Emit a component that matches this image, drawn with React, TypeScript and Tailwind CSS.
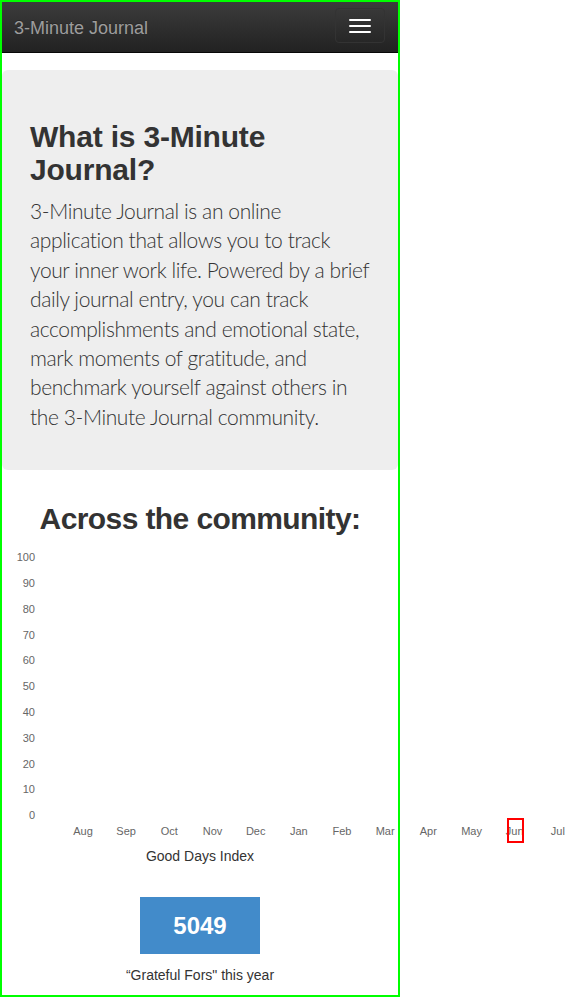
const MONTHS = ["Aug", "Sep", "Oct", "Nov", "Dec", "Jan", "Feb", "Mar", "Apr", "May", "Jun", "Jul"];
const TICKS = [100, 90, 80, 70, 60, 50, 40, 30, 20, 10, 0];

const INTRO_LINES = [
  "3-Minute Journal is an online",
  "application that allows you to track",
  "your inner work life. Powered by a brief",
  "daily journal entry, you can track",
  "accomplishments and emotional state,",
  "mark moments of gratitude, and",
  "benchmark yourself against others in",
  "the 3-Minute Journal community.",
];

function Navbar() {
  return (
    <nav className="flex h-[51px] items-center justify-between border-b border-[#080808] bg-gradient-to-b from-[#3c3c3c] to-[#222]">
      <a
        href="#"
        className="pl-[12px] pt-[1px] text-[18px] leading-[20px] text-[#9d9d9d] text-shadow-[0_-1px_0_rgba(0,0,0,0.25)]"
      >
        3-Minute Journal
      </a>
      <button
        type="button"
        className="mr-[13px] mb-[3px] flex h-[35px] w-[50px] flex-col items-center justify-center gap-[4px] rounded-[4px] border border-[#333]"
        aria-label="Toggle navigation"
      >
        <span className="block h-[2px] w-[22px] rounded-[1px] bg-white" />
        <span className="block h-[2px] w-[22px] rounded-[1px] bg-white" />
        <span className="block h-[2px] w-[22px] rounded-[1px] bg-white" />
      </button>
    </nav>
  );
}

function Chart() {
  return (
    <div className="mt-[15px]">
      <div className="flex h-[272px] w-[33px] flex-col justify-between text-right text-[11px] leading-[14px] text-[#666]">
        {TICKS.map((tick) => (
          <span key={tick}>{tick}</span>
        ))}
      </div>
      <div className="ml-[59.4px] mt-[1px] flex text-[11px] leading-[16px] text-[#666]">
        {MONTHS.map((month) => (
          <span key={month} className="relative w-[43.18px] shrink-0 text-center whitespace-nowrap">
            {month}
            {month === "Jun" ? (
              <span className="absolute left-[13.8px] top-[-5px] h-[25px] w-[17.5px] border-2 border-[#ff0000]" />
            ) : null}
          </span>
        ))}
      </div>
      <p className="mt-[7px] text-center text-[14px] leading-[20px] text-[#333]">Good Days Index</p>
    </div>
  );
}

export default function App() {
  return (
    <div className="h-[997px] w-[570px] overflow-hidden bg-white font-['Liberation_Sans',Arial,sans-serif] text-[#333]">
      <div className="box-border h-[997px] w-[400px] border-2 border-[#00ff00]">
        <Navbar />

        <div className="mt-[17px] rounded-[6px] bg-[#eee] pl-[28px] pr-[16px] pt-[50px] pb-[39px]">
          <h2 className="mb-[10px] text-[30px] font-bold leading-[33px] tracking-[-0.2px]">What is 3-Minute Journal?</h2>
          <p className="font-['Lato',sans-serif] text-[21px] font-light leading-[29.4px] tracking-[-0.4px]">
            {INTRO_LINES.map((line) => (
              <span key={line} className="block whitespace-nowrap">
                {line}
              </span>
            ))}
          </p>
        </div>

        <h2 className="mt-[32px] text-center text-[30px] font-bold leading-[33px] tracking-[-0.6px]">
          Across the community:
        </h2>

        <Chart />

        <div className="mx-auto mt-[31px] flex h-[57px] w-[120px] items-center justify-center bg-[#428bca] text-[24px] font-bold text-white">
          5049
        </div>
        <p className="mt-[11px] text-center text-[14px] leading-[20px]">“Grateful Fors" this year</p>
      </div>
    </div>
  );
}
